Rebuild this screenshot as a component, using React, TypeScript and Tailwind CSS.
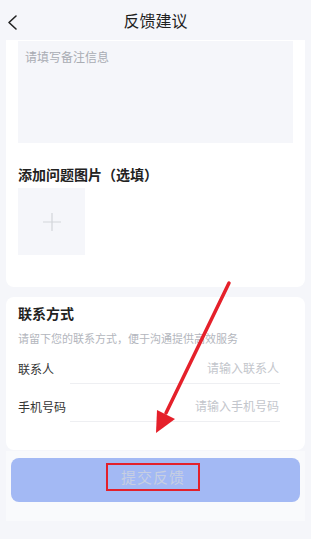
import React from "react";

export default function App() {
  return (
    <div
      className="relative w-[311px] h-[539px] overflow-hidden bg-[#f5f6fa]"
      style={{ fontFamily: '"Noto Sans CJK SC", "Noto Sans", sans-serif' }}
    >
      {/* Header */}
      <div className="relative h-[40px] flex items-center justify-center">
        <svg className="absolute left-[6px] top-[14px]" width="14" height="17" viewBox="0 0 14 17">
          <path d="M10 2 L3 8.5 L10 15" fill="none" stroke="#222" strokeWidth="1.6" strokeLinecap="round" strokeLinejoin="round" />
        </svg>
        <span className="text-[16px] leading-[20px] text-[#1f1f1f]">反馈建议</span>
      </div>

      {/* Card 1 */}
      <div className="mx-[6px] bg-white rounded-b-[8px] px-[12px] pt-[1px] pb-[32px]">
        <div className="h-[102px] bg-[#f5f6fa] pl-[7px] pt-[2px]">
          <span className="text-[12px] leading-[20px] text-[#a9acb3]">请填写备注信息</span>
        </div>
        <div className="mt-[21px] text-[14px] leading-[20px] font-bold text-[#222]">添加问题图片（选填）</div>
        <div className="mt-[4px] w-[67px] h-[67px] bg-[#f5f6fa] flex items-center justify-center">
          <svg width="20" height="20" viewBox="0 0 20 20">
            <path d="M10 1 V19 M1 10 H19" stroke="#d3d5da" strokeWidth="1.2" />
          </svg>
        </div>
      </div>

      {/* Card 2 */}
      <div className="mx-[6px] mt-[10px] bg-white rounded-[8px] px-[12px] pt-[6px] pb-[28px]">
        <div className="text-[14px] leading-[20px] font-bold text-[#222]">联系方式</div>
        <div className="mt-[7px] text-[11px] leading-[16px] text-[#b3b6bd]">请留下您的联系方式，便于沟通提供高效服务</div>
        <div className="flex items-end h-[38px]">
          <div className="w-[52px] pb-[5px] text-[12px] leading-[20px] text-[#333]">联系人</div>
          <div className="flex-1 mr-[13px] h-full flex items-end justify-end pb-[5px] pr-[1px] border-b border-[#eeeff2]">
            <span className="text-[12px] leading-[20px] text-[#c3c6cc]">请输入联系人</span>
          </div>
        </div>
        <div className="flex items-end h-[38px]">
          <div className="w-[52px] pb-[5px] text-[12px] leading-[20px] text-[#333]">手机号码</div>
          <div className="flex-1 mr-[13px] h-full flex items-end justify-end pb-[5px] pr-[1px] border-b border-[#eeeff2]">
            <span className="text-[12px] leading-[20px] text-[#c3c6cc]">请输入手机号码</span>
          </div>
        </div>
      </div>

      {/* Footer */}
      <div className="mx-[6px] mt-[1px] bg-[#f9fafc] px-[5px] pt-[7px] pb-[19px]">
        <div className="h-[44px] rounded-[8px] bg-[#a3b9f4] flex items-center justify-center">
          <span className="-mt-[6px] -ml-[5px] inline-block border-2 border-[#e3202b] px-[13px] py-[2px] text-[15px] leading-[20px] tracking-[1px] text-[#c7cfe2]">
            提交反馈
          </span>
        </div>
      </div>

      {/* Annotation arrow */}
      <svg className="absolute left-0 top-0 pointer-events-none" width="311" height="539" viewBox="0 0 311 539">
        <line x1="229" y1="283" x2="166" y2="413" stroke="#e5202a" strokeWidth="3.5" strokeLinecap="round" />
        <polygon points="156,433 157,410 175,419" fill="#e5202a" />
      </svg>
    </div>
  );
}
